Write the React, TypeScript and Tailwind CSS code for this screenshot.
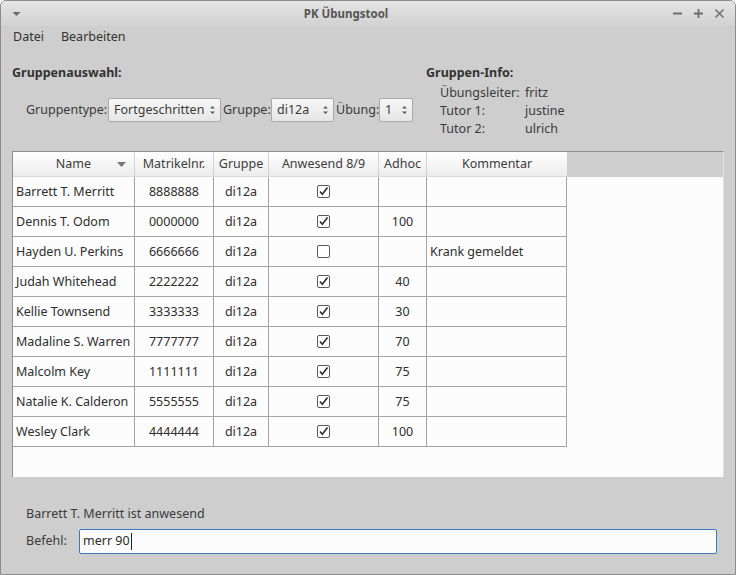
import React from "react";

const students = [
  { name: "Barrett T. Merritt", nr: "8888888", gruppe: "di12a", anwesend: true, adhoc: "", kommentar: "" },
  { name: "Dennis T. Odom", nr: "0000000", gruppe: "di12a", anwesend: true, adhoc: "100", kommentar: "" },
  { name: "Hayden U. Perkins", nr: "6666666", gruppe: "di12a", anwesend: false, adhoc: "", kommentar: "Krank gemeldet" },
  { name: "Judah Whitehead", nr: "2222222", gruppe: "di12a", anwesend: true, adhoc: "40", kommentar: "" },
  { name: "Kellie Townsend", nr: "3333333", gruppe: "di12a", anwesend: true, adhoc: "30", kommentar: "" },
  { name: "Madaline S. Warren", nr: "7777777", gruppe: "di12a", anwesend: true, adhoc: "70", kommentar: "" },
  { name: "Malcolm Key", nr: "1111111", gruppe: "di12a", anwesend: true, adhoc: "75", kommentar: "" },
  { name: "Natalie K. Calderon", nr: "5555555", gruppe: "di12a", anwesend: true, adhoc: "75", kommentar: "" },
  { name: "Wesley Clark", nr: "4444444", gruppe: "di12a", anwesend: true, adhoc: "100", kommentar: "" },
];

const cols = "grid grid-cols-[122px_79px_55px_110px_48px_140px]";

function SpinArrows() {
  return (
    <svg width="7" height="12" viewBox="0 0 7 12" className="shrink-0">
      <path d="M1 4.5 L3.5 2 L6 4.5 Z" fill="#5a5a5a" />
      <path d="M1 7.5 L3.5 10 L6 7.5 Z" fill="#5a5a5a" />
    </svg>
  );
}

function Combo({ value, width }: { value: string; width: string }) {
  return (
    <div
      className={`${width} shrink-0 h-[24px] flex items-center justify-between pl-[5px] pr-[4px] border border-[#a9a9a9] rounded-[2px] bg-gradient-to-b from-[#f7f7f7] to-[#e6e6e6] whitespace-nowrap`}
    >
      <span className="pt-[1px]">{value}</span>
      <SpinArrows />
    </div>
  );
}

function CheckBox({ checked }: { checked: boolean }) {
  return (
    <div className="w-[13px] h-[13px] border border-[#5a5a5a] rounded-[2px] bg-white flex items-center justify-center">
      {checked && (
        <svg width="11" height="11" viewBox="0 0 11 11">
          <path d="M2 5.5 L4.3 8.3 L9.5 1.5" fill="none" stroke="#2b2b2b" strokeWidth="1.6" />
        </svg>
      )}
    </div>
  );
}

export default function App() {
  return (
    <div
      className="w-[736px] h-[575px] bg-[#cecece] border border-[#8c8c8c] rounded-t-[6px] flex flex-col text-[12.5px] text-[#3a3a3a] overflow-hidden whitespace-nowrap"
      style={{ fontFamily: '"Noto Sans", "Open Sans", sans-serif' }}
    >
      {/* title bar */}
      <div className="h-[25px] flex items-center px-[10px] bg-gradient-to-b from-[#e4e4e4] to-[#d2d2d2]">
        <div className="w-[60px] flex items-center">
          <svg width="9" height="6" viewBox="0 0 9 6" className="ml-[1px]">
            <path d="M0.5 1 L8.5 1 L4.5 5 Z" fill="#6a6a6a" />
          </svg>
        </div>
        <div className="flex-1 text-center pr-[44px] font-bold text-[#555] text-[11.5px]">PK Übungstool</div>
        <div className="w-[60px] flex items-center justify-end gap-[12px] pr-[1px]">
          <svg width="9" height="9" viewBox="0 0 9 9">
            <path d="M0 4.5 H9" stroke="#6e6e6e" strokeWidth="1.8" />
          </svg>
          <svg width="9" height="9" viewBox="0 0 9 9">
            <path d="M0 4.5 H9 M4.5 0 V9" stroke="#6e6e6e" strokeWidth="1.8" />
          </svg>
          <svg width="9" height="9" viewBox="0 0 9 9">
            <path d="M0.5 0.5 L8.5 8.5 M8.5 0.5 L0.5 8.5" stroke="#7a7a7a" strokeWidth="1.6" />
          </svg>
        </div>
      </div>

      {/* menu bar */}
      <div className="h-[23px] flex items-center gap-[17px] pl-[12px] text-[#333]">
        <span>Datei</span>
        <span>Bearbeiten</span>
      </div>

      {/* selection + info */}
      <div className="flex pl-[11px] pt-[15px] h-[102px] shrink-0">
        <div className="w-[414px] shrink-0">
          <div className="font-bold text-[#333] leading-[18px]">Gruppenauswahl:</div>
          <div className="flex items-center gap-[2px] pl-[14px] mt-[16px]">
            <span className="w-[80px]">Gruppentype:</span>
            <Combo value="Fortgeschritten" width="w-[113px]" />
            <span className="w-[46px]">Gruppe:</span>
            <Combo value="di12a" width="w-[63px]" />
            <span className="w-[41px]">Übung:</span>
            <Combo value="1" width="w-[34px]" />
          </div>
        </div>
        <div>
          <div className="font-bold text-[#333] leading-[18px]">Gruppen-Info:</div>
          <div className="pl-[14px] grid grid-cols-[85px_auto] leading-[18px] mt-[2px]">
            <span>Übungsleiter:</span>
            <span>fritz</span>
            <span>Tutor 1:</span>
            <span>justine</span>
            <span>Tutor 2:</span>
            <span>ulrich</span>
          </div>
        </div>
      </div>

      {/* table */}
      <div className="ml-[11px] w-[712px] h-[326px] shrink-0 border-t border-l border-r border-t-[#8e8e8e] border-l-[#8e8e8e] border-r-[#e0e0e0] bg-[#fcfcfc] flex flex-col">
        <div className="flex h-[25px] shrink-0">
          <div className={`${cols} bg-gradient-to-b from-[#ffffff] to-[#ececec] border-b border-[#d8d8d8] text-[#3c3c3c]`}>
            <div className="flex items-center justify-center relative border-r border-[#d2d2d2] pt-[1px]">
              Name
              <svg width="9" height="5" viewBox="0 0 9 5" className="absolute right-[8px] top-[10px]">
                <path d="M0 0 H9 L4.5 5 Z" fill="#777" />
              </svg>
            </div>
            <div className="flex items-center justify-center border-r border-[#d2d2d2] pt-[1px]">Matrikelnr.</div>
            <div className="flex items-center justify-center border-r border-[#d2d2d2] pt-[1px]">Gruppe</div>
            <div className="flex items-center justify-center border-r border-[#d2d2d2] pt-[1px]">Anwesend 8/9</div>
            <div className="flex items-center justify-center border-r border-[#d2d2d2] pt-[1px]">Adhoc</div>
            <div className="flex items-center justify-center pt-[1px]">Kommentar</div>
          </div>
          <div className="flex-1 bg-[#cecece]" />
        </div>
        {students.map((s) => (
          <div key={s.nr} className={`${cols} h-[30px] shrink-0 w-[554px] text-[#2e2e2e]`}>
            <div className="flex items-center pl-[3px] pt-[1px] border-r border-b border-[#a4a4a4] overflow-hidden">{s.name}</div>
            <div className="flex items-center justify-center pt-[1px] border-r border-b border-[#a4a4a4]">{s.nr}</div>
            <div className="flex items-center justify-center pt-[1px] border-r border-b border-[#a4a4a4]">{s.gruppe}</div>
            <div className="flex items-center justify-center border-r border-b border-[#a4a4a4]">
              <CheckBox checked={s.anwesend} />
            </div>
            <div className="flex items-center justify-center pt-[1px] border-r border-b border-[#a4a4a4]">{s.adhoc}</div>
            <div className="flex items-center pl-[3px] pt-[1px] border-r border-b border-[#a4a4a4]">{s.kommentar}</div>
          </div>
        ))}
      </div>

      {/* bottom */}
      <div className="pl-[25px] pr-[18px] pt-[28px]">
        <div className="leading-[18px]">Barrett T. Merritt ist anwesend</div>
        <div className="flex items-center mt-[6px]">
          <span className="w-[53px]">Befehl:</span>
          <div className="flex-1 h-[25px] border border-[#3d78bf] rounded-[2px] bg-[#fcfcfc] flex items-center pl-[3px] text-[#2a2a2a]">
            merr 90
            <span className="w-[1px] h-[17px] bg-[#222] ml-[1px]" />
          </div>
        </div>
      </div>
    </div>
  );
}
